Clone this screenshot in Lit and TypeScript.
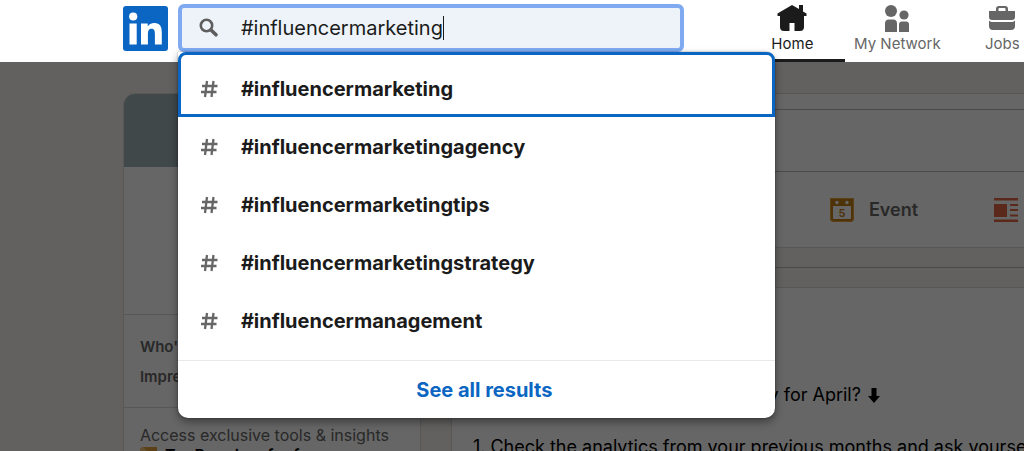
import { LitElement, html, css, svg } from "lit";
import { customElement, property } from "lit/decorators.js";

const icons = {
  logo: svg`<svg viewBox="0 0 45 45" width="45" height="45" aria-hidden="true"><rect width="45" height="45" rx="3" fill="#0a66c2"/><circle cx="10.200" cy="10.500" r="4.100" fill="#fff"/><path fill="#fff" d="M6.500 17.500h7.200v21H6.500zM18 17.500h6.700v3c1.200-2.200 3.600-3.500 6.700-3.500 5.600 0 7.400 3.600 7.400 9.500v12h-6.900V28c0-3.200-.6-5.300-3.300-5.300-2.800 0-3.700 2-3.700 5.300v10.500H18z"/></svg>`,
  search: svg`<svg viewBox="0 0 20 20" width="20" height="20" fill="none" stroke="#5e5e5e" aria-hidden="true"><circle cx="7.500" cy="7.500" r="5.700" stroke-width="2.600"/><path d="M12 12l5 4.800" stroke-width="3.600" stroke-linecap="round"/></svg>`,
  hash: svg`<svg viewBox="0 0 18 18" width="18" height="18" fill="none" stroke="#666" stroke-width="2.300" aria-hidden="true"><path d="M2 6h15.500M1 12h15.500M7 1L5 17M13.500 1l-2 16"/></svg>`,
  home: svg`<svg viewBox="0 0 30 28" width="30" height="28" fill="#1b1b1b" aria-hidden="true"><path d="M15 1L.5 9.500V12H3v11q0 4 4 4h5.500v-8h5v8H23q4 0 4-4V12h2.500V9.500L26 7.400V1h-4v4.100z"/></svg>`,
  network: svg`<svg viewBox="0 0 26 28" width="26" height="28" fill="#666" aria-hidden="true"><circle cx="7" cy="7" r="6"/><circle cx="20" cy="11" r="4.600"/><path d="M1 28V19.500q0-4 4-4h4q4 0 4 4V28zM15 28v-7.500q0-3 3-3h4q3 0 3 3V28z"/></svg>`,
  jobs: svg`<svg viewBox="0 0 28 26" width="28" height="26" fill="#666" aria-hidden="true"><path d="M8 6V4q0-3 3-3h6q3 0 3 3v2h7v6q0 3-3 3H4q-3 0-3-3V6zm2.500 0h7V4q0-1-1-1h-5q-1 0-1 1z"/><path d="M1 15.500q1.300 1.500 3.500 1.500h19q2.200 0 3.500-1.500V21q0 4-4 4H5q-4 0-4-4z"/></svg>`,
  event: svg`<svg viewBox="0 0 24 24" width="24" height="24" aria-hidden="true"><path fill="#c37d16" fill-rule="evenodd" d="M0 0h24v20a4 4 0 0 1-4 4H4a4 4 0 0 1-4-4zM3 8v12q0 1 1 1h16q1 0 1-1V8z"/><path d="M.5.500h23V20a3.500 3.500 0 0 1-3.500 3.500H4A3.500 3.500 0 0 1 .5 20z" fill="none" stroke="#e7a33e"/><circle cx="7" cy="4.500" r="1.700" fill="#fff"/><circle cx="17" cy="4.500" r="1.700" fill="#fff"/><text x="12" y="18.500" text-anchor="middle" font-family="Inter, sans-serif" font-size="11" font-weight="600" fill="#c37d16">5</text></svg>`,
  article: svg`<svg viewBox="0 0 24 24" width="24" height="24" fill="#e16745" aria-hidden="true"><path d="M0 0h24v2.500H0zM0 21.500h24V24H0zM0 6h13v13H0zM16 6h8v2h-8zM16 11h8v2h-8zM16 16.500h8v2h-8z"/></svg>`,
  premium: svg`<svg viewBox="0 0 17 17" width="17" height="17" aria-hidden="true"><rect width="17" height="17" rx="3" fill="#f8c77e"/><path d="M3 0h14v14z" fill="#e7a33e"/></svg>`,
  arrow: svg`<svg class="arrow" viewBox="0 0 12 16" width="12" height="16" aria-hidden="true"><path d="M3.500 0h5v8H12l-6 7-6-7h3.500z"/></svg>`,
};

@customElement("nav-item")
export class NavItem extends LitElement {
  @property() icon: "home" | "network" | "jobs" = "home";
  @property() label = "";
  @property({ type: Boolean, reflect: true }) active = false;

  static styles = css`
    :host { display: block; flex: none; width: 105px; }
    .item {
      box-sizing: border-box; height: 62px; padding-top: 4px;
      display: flex; flex-direction: column; align-items: center; gap: 2px;
      color: #666; text-decoration: none; font-size: 15px; line-height: 20px;
      border-bottom: 3px solid transparent;
    }
    .icon { height: 28px; display: flex; align-items: center; }
    :host([active]) .item { color: #1b1b1b; border-color: #1b1b1b; }
  `;

  render() {
    return html`<a class="item" href="#"><span class="icon">${icons[this.icon]}</span>${this.label}</a>`;
  }
}

@customElement("search-suggestions")
export class SearchSuggestions extends LitElement {
  @property({ attribute: false }) items: string[] = [];

  static styles = css`
    :host {
      display: block; background: #fff; border-radius: 0 10px 10px 10px;
      box-shadow: 0 4px 8px rgba(0, 0, 0, 0.4), 0 0 2px rgba(0, 0, 0, 0.4);
      font-size: 20px; line-height: 28px;
    }
    .list { list-style: none; margin: 0; padding: 0 0 10px; }
    .row {
      display: flex; align-items: center; gap: 23px; box-sizing: border-box;
      height: 58px; padding: 0 22px; color: #1b1b1b; font-weight: 700; text-decoration: none;
    }
    .row svg { flex: none; }
    .selected {
      height: 65px; padding: 8px 19px 0; margin-bottom: 1px; border: 3px solid #0a66c2;
      border-radius: 8px 8px 0 0;
    }
    .footer { border-top: 1px solid #e8e8e8; padding: 15px 0 14px 16px; text-align: center; }
    .all { color: #0a66c2; font-weight: 700; text-decoration: none; }
  `;

  render() {
    return html`
      <ul class="list">
        ${this.items.map((t, i) => html`<li><a href="#" class="row ${i === 0 ? "selected" : ""}">${icons.hash}<span>${t}</span></a></li>`)}
      </ul>
      <div class="footer"><a class="all" href="#">See all results</a></div>
    `;
  }
}

@customElement("app-root")
export class AppRoot extends LitElement {
  static styles = css`
    :host {
      display: block; position: relative; height: 100vh; overflow: hidden;
      background: #f4f2ee; color: #1b1b1b; font-family: Inter, "Liberation Sans", sans-serif;
    }
    .header {
      position: relative; z-index: 2; height: 62px; background: #fff;
      display: flex; align-items: flex-start; padding-left: 12%;
    }
    .logo { flex: none; height: 45px; margin-top: 6px; }
    .search { position: relative; flex: 0 1 506px; margin: 4px 56px 0 10px; }
    .field {
      display: flex; align-items: center; box-sizing: border-box; height: 48px;
      padding-left: 17px; gap: 22px; background: #edf3f8;
      border: 4px solid #7faaf2; border-radius: 6px;
    }
    .field label { display: flex; }
    .entry { display: flex; align-items: center; }
    .entry input {
      field-sizing: content; border: 0; padding: 0; background: none; outline: 0;
      font: 20px/28px Inter, "Liberation Sans", sans-serif; color: #1b1b1b; caret-color: transparent;
    }
    .caret { width: 1px; height: 24px; background: #1b1b1b; }
    search-suggestions { position: absolute; top: 48px; left: 0; width: 597px; }
    .nav { display: flex; flex: none; margin-right: -32px; }
    .scrim { position: absolute; inset: 0; z-index: 1; background: rgba(0, 0, 0, 0.6); }
    .page { display: flex; align-items: flex-start; gap: 30px; padding: 31px 0 0 12%; }
    .card { background: #fff; border: 1px solid #dcdad6; border-radius: 12px; box-sizing: border-box; overflow: hidden; }
    .profile { flex: 0 0 298px; font-size: 15px; line-height: 20px; }
    .banner { height: 73px; background: #a0b4b7; }
    .identity { height: 147px; }
    .stats { border-top: 1px solid #dcdad6; padding: 22px 16px 20px; display: grid; gap: 10px; color: #666; font-weight: 600; }
    .upsell { border-top: 1px solid #dcdad6; padding: 17px 16px; color: #666; font-size: 16px; }
    .premium { display: flex; gap: 8px; align-items: center; color: #000; font-weight: 600; }
    .feed { flex: 0 0 722px; }
    .share { height: 155px; }
    .start {
      display: block; box-sizing: border-box; width: 600px; height: 63px; margin: 15px 0 0 96px;
      border: 1px solid #b8b8b8; border-radius: 32px; background: none;
      font: 600 18px/24px Inter, sans-serif; color: #666; text-align: left; padding-left: 24px;
    }
    .actions { display: grid; grid-template-columns: repeat(4, 164px); padding: 25px 0 0 50px; }
    .action {
      display: flex; align-items: center; gap: 15px; border: 0; padding: 0; background: none;
      font: 600 18px/26px Inter, sans-serif; color: #666; white-space: nowrap;
    }
    .sort { border: 0; border-top: 1px solid #b8b8b8; margin: 19px 0; }
    .post { padding: 94px 21px; font-size: 18px; line-height: 26px; color: #000; white-space: nowrap; height: 400px; }
    .post p { margin: 0 0 26px; }
    .arrow { vertical-align: -3px; margin-left: 2px; }
  `;

  render() {
    return html`
      <header class="header">
        <a class="logo" href="#" aria-label="LinkedIn">${icons.logo}</a>
        <div class="search">
          <div class="field">
            <label for="q" aria-label="Search">${icons.search}</label>
            <div class="entry"><input id="q" type="text" value="#influencermarketing" /><span class="caret"></span></div>
          </div>
          <search-suggestions .items=${[
            "#influencermarketing",
            "#influencermarketingagency",
            "#influencermarketingtips",
            "#influencermarketingstrategy",
            "#influencermanagement",
          ]}></search-suggestions>
        </div>
        <nav class="nav">
          <nav-item icon="home" label="Home" active></nav-item>
          <nav-item icon="network" label="My Network"></nav-item>
          <nav-item icon="jobs" label="Jobs"></nav-item>
        </nav>
      </header>
      <main class="page">
        <aside class="card profile">
          <div class="banner"></div>
          <div class="identity"></div>
          <div class="stats"><span>Who's viewed you</span><span>Impressions</span></div>
          <div class="upsell">Access exclusive tools &amp; insights
            <div class="premium">${icons.premium}<span>Try Premium for free</span></div>
          </div>
        </aside>
        <div class="feed">
          <section class="card share">
            <button class="start">Start a post</button>
            <div class="actions">
              <button class="action">Photo</button>
              <button class="action">Video</button>
              <button class="action">${icons.event}Event</button>
              <button class="action" aria-label="Write article">${icons.article}</button>
            </div>
          </section>
          <hr class="sort" />
          <article class="card post">
            <p>Are you doing your content strategy for April? ${icons.arrow}</p>
            <p>1. Check the analytics from your previous months and ask yourself</p>
          </article>
        </div>
      </main>
      <div class="scrim"></div>
    `;
  }
}
